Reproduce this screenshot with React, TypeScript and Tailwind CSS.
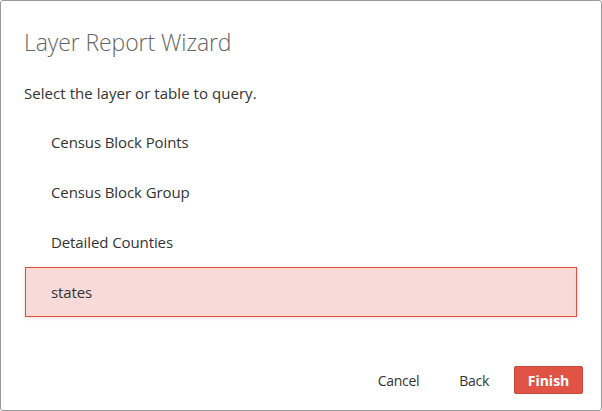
import React, { useState } from 'react';

const layers = ['Census Block Points', 'Census Block Group', 'Detailed Counties', 'states'];

export default function App() {
  const [selected, setSelected] = useState('states');

  return (
    <div
      className="w-[602px] h-[411px] bg-white border border-[#999] rounded-[3px] flex flex-col text-[#333]"
      style={{ fontFamily: '"Open Sans", "Noto Sans", sans-serif' }}
    >
      <h1 className="pl-[23px] pt-[25px] text-[23px] font-light leading-[32px] text-[#666] tracking-[-0.1px]">
        Layer Report Wizard
      </h1>

      <p className="pl-[23px] mt-[25px] text-[15px] leading-[20px] tracking-[0.05px]">
        Select the layer or table to query.
      </p>

      <div className="mx-[24px] mt-[14px] flex flex-col">
        {layers.map(layer => (
          <button
            key={layer}
            onClick={() => setSelected(layer)}
            className={`h-[50px] pl-[25px] text-left text-[15px] tracking-[-0.1px] border ${
              selected === layer
                ? 'bg-[#f8dbd9] border-[#e74c3c] shadow-[0_1px_4px_rgba(0,0,0,0.12)]'
                : 'bg-white border-transparent'
            }`}
          >
            {layer}
          </button>
        ))}
      </div>

      <div className="mt-auto mb-[16px] mr-[18px] flex items-center justify-end text-[14px]">
        <button className="px-[20px] h-[28px] tracking-[-0.3px]">Cancel</button>
        <button className="px-[20px] h-[28px] tracking-[-0.3px]">Back</button>
        <button className="ml-[5px] w-[69px] h-[28px] rounded-[2px] bg-[#e15345] border border-[#c8473b] text-white font-bold text-[14px]">
          Finish
        </button>
      </div>
    </div>
  );
}
